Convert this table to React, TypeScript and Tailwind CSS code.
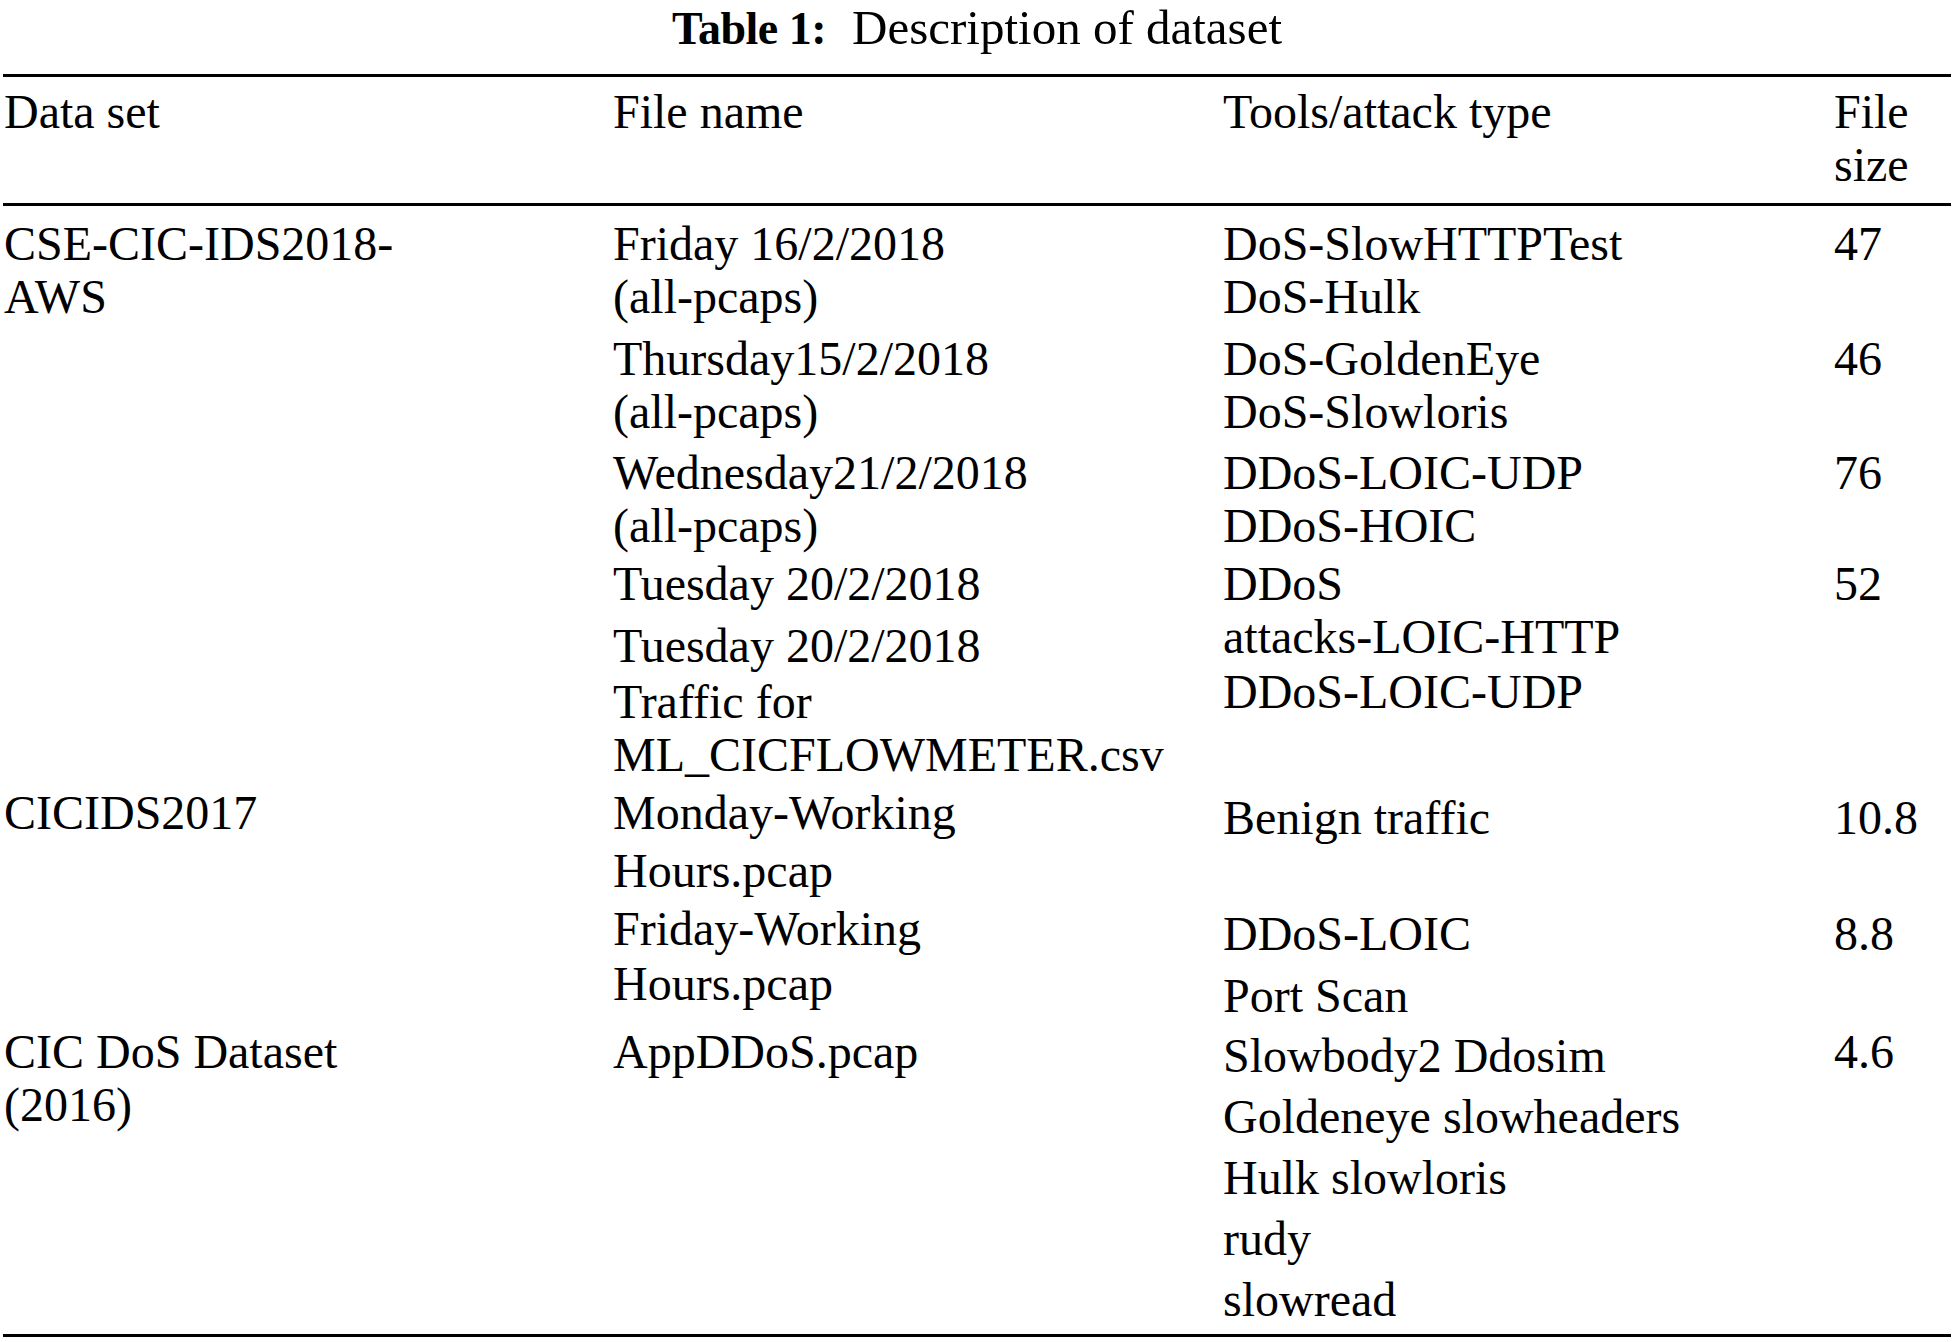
import React from 'react';

interface Para {
  mt?: string;
  lines: string[];
}

interface Cell {
  pad?: string;
  paras: Para[];
}

interface Row {
  gap: string;
  cells: [Cell, Cell, Cell, Cell];
}

const p = (lines: string[], mt?: string): Para => ({ lines, mt });
const c = (paras: Para[], pad?: string): Cell => ({ paras, pad });

const rows: Row[] = [
  {
    gap: 'mt-[11px]',
    cells: [
      c([p(['CSE-CIC-IDS2018-', 'AWS'])]),
      c([p(['Friday 16/2/2018', '(all-pcaps)'])]),
      c([p(['DoS-SlowHTTPTest', 'DoS-Hulk'])]),
      c([p(['47'])]),
    ],
  },
  {
    gap: 'mt-[9px]',
    cells: [
      c([]),
      c([p(['Thursday15/2/2018', '(all-pcaps)'])]),
      c([p(['DoS-GoldenEye', 'DoS-Slowloris'])]),
      c([p(['46'])]),
    ],
  },
  {
    gap: 'mt-[8px]',
    cells: [
      c([]),
      c([p(['Wednesday21/2/2018', '(all-pcaps)'])]),
      c([p(['DDoS-LOIC-UDP', 'DDoS-HOIC'])]),
      c([p(['76'])]),
    ],
  },
  {
    gap: 'mt-[5px]',
    cells: [
      c([]),
      c([
        p(['Tuesday 20/2/2018']),
        p(['Tuesday 20/2/2018'], 'mt-[9px]'),
        p(['Traffic for', 'ML_CICFLOWMETER.csv'], 'mt-[3px]'),
      ]),
      c([p(['DDoS', 'attacks-LOIC-HTTP']), p(['DDoS-LOIC-UDP'], 'mt-[2px]')]),
      c([p(['52'])]),
    ],
  },
  {
    gap: 'mt-[5px]',
    cells: [
      c([p(['CICIDS2017'])]),
      c([p(['Monday-Working']), p(['Hours.pcap'], 'mt-[5px]')]),
      c([p(['Benign traffic'])], 'pt-[5px]'),
      c([p(['10.8'])], 'pt-[5px]'),
    ],
  },
  {
    gap: 'mt-[5px]',
    cells: [
      c([]),
      c([p(['Friday-Working']), p(['Hours.pcap'], 'mt-[2px]')]),
      c([p(['DDoS-LOIC']), p(['Port Scan'], 'mt-[9px]')], 'pt-[5px]'),
      c([p(['8.8'])], 'pt-[5px]'),
    ],
  },
  {
    gap: 'mt-[3px]',
    cells: [
      c([p(['CIC DoS Dataset', '(2016)'])]),
      c([p(['AppDDoS.pcap'])]),
      c(
        [
          p(['Slowbody2 Ddosim']),
          p(['Goldeneye slowheaders'], 'mt-[8px]'),
          p(['Hulk slowloris'], 'mt-[8px]'),
          p(['rudy'], 'mt-[8px]'),
          p(['slowread'], 'mt-[8px]'),
        ],
        'pt-[4px]'
      ),
      c([p(['4.6'])]),
    ],
  },
];

const cols = 'grid grid-cols-[609px_610px_611px_1fr]';

function CellBlock({ cell }: { cell: Cell }) {
  return (
    <div className={cell.pad ?? ''}>
      {cell.paras.map((para, i) => (
        <div key={i} className={para.mt ?? ''}>
          {para.lines.map((line, j) => (
            <div key={j} className="whitespace-nowrap">
              {line}
            </div>
          ))}
        </div>
      ))}
    </div>
  );
}

function Rule() {
  return <div className="h-[3px] bg-black" />;
}

export default function App() {
  return (
    <div
      className="flex h-[1342px] w-[1954px] flex-col bg-white px-[3px] text-black"
      style={{ fontFamily: '"Liberation Serif", "Times New Roman", serif' }}
    >
      <div className="text-center text-[49px] leading-[55px]">
        <span className="text-[46px] font-bold tracking-[-0.5px]">Table 1:</span>
        <span className="ml-[26px]">Description of dataset</span>
      </div>

      <div className="mt-[18px]">
        <Rule />
      </div>

      <div className={`${cols} pl-px pt-[8px] pb-[12px] text-[48px] leading-[53px]`}>
        <div>Data set</div>
        <div>File name</div>
        <div>Tools/attack type</div>
        <div>
          <div>File</div>
          <div>size</div>
        </div>
      </div>

      <Rule />

      <div className="flex-1 pl-px text-[48px] leading-[53px]">
        {rows.map((row, i) => (
          <div key={i} className={`${cols} ${row.gap}`}>
            {row.cells.map((cell, j) => (
              <CellBlock key={j} cell={cell} />
            ))}
          </div>
        ))}
      </div>

      <div className="mb-[5px]">
        <Rule />
      </div>
    </div>
  );
}
